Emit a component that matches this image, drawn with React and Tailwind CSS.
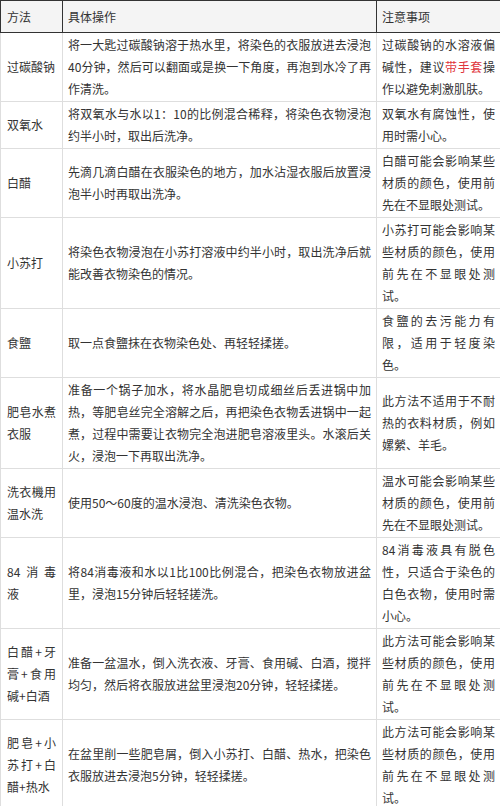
import React from 'react';

const rows = [
  {
    name: '过碳酸钠',
    how: '将一大匙过碳酸钠溶于热水里，将染色的衣服放进去浸泡40分钟，然后可以翻面或是换一下角度，再泡到水冷了再作清洗。',
    note: (
      <>
        过碳酸钠的水溶液偏碱性，建议<span className="text-[#e0343c]">带手套</span>操作以避免刺激肌肤。
      </>
    ),
  },
  {
    name: '双氧水',
    how: '将双氧水与水以1：10的比例混合稀释，将染色衣物浸泡约半小时，取出后洗净。',
    note: '双氧水有腐蚀性，使用时需小心。',
  },
  {
    name: '白醋',
    how: '先滴几滴白醋在衣服染色的地方，加水沾湿衣服后放置浸泡半小时再取出洗净。',
    note: '白醋可能会影响某些材质的颜色，使用前先在不显眼处测试。',
  },
  {
    name: '小苏打',
    how: '将染色衣物浸泡在小苏打溶液中约半小时，取出洗净后就能改善衣物染色的情况。',
    note: '小苏打可能会影响某些材质的颜色，使用前先在不显眼处测试。',
  },
  {
    name: '食鹽',
    how: '取一点食鹽抹在衣物染色处、再轻轻揉搓。',
    note: '食鹽的去污能力有限，适用于轻度染色。',
  },
  {
    name: '肥皂水煮衣服',
    how: '准备一个锅子加水，将水晶肥皂切成细丝后丢进锅中加热，等肥皂丝完全溶解之后，再把染色衣物丢进锅中一起煮，过程中需要让衣物完全泡进肥皂溶液里头。水滚后关火，浸泡一下再取出洗净。',
    note: '此方法不适用于不耐热的衣料材质，例如嫘縈、羊毛。',
  },
  {
    name: '洗衣機用温水洗',
    how: '使用50～60度的温水浸泡、清洗染色衣物。',
    note: '温水可能会影响某些材质的颜色，使用前先在不显眼处测试。',
  },
  {
    name: '84消毒液',
    how: '将84消毒液和水以1比100比例混合，把染色衣物放进盆里，浸泡15分钟后轻轻搓洗。',
    note: '84消毒液具有脱色性，只适合于染色的白色衣物，使用时需小心。',
  },
  {
    name: '白醋+牙膏+食用碱+白酒',
    how: '准备一盆温水，倒入洗衣液、牙膏、食用碱、白酒，搅拌均匀，然后将衣服放进盆里浸泡20分钟，轻轻揉搓。',
    note: '此方法可能会影响某些材质的颜色，使用前先在不显眼处测试。',
  },
  {
    name: '肥皂+小苏打+白醋+热水',
    how: '在盆里削一些肥皂屑，倒入小苏打、白醋、热水，把染色衣服放进去浸泡5分钟，轻轻揉搓。',
    note: '此方法可能会影响某些材质的颜色，使用前先在不显眼处测试。',
  },
];

const App = () => {
  return (
    <div className="w-[500px] bg-white text-[#333] font-['Noto_Sans_CJK_SC','Noto_Sans',sans-serif] text-[12px] leading-[22px]">
      <table className="w-[500px] table-fixed border-collapse">
        <colgroup>
          <col className="w-[62px]" />
          <col className="w-[314px]" />
          <col className="w-[124px]" />
        </colgroup>
        <thead>
          <tr className="h-[32px] bg-[#f4f4f4]">
            <th className="border border-[#333] px-[6px] text-left font-normal align-middle">方法</th>
            <th className="border border-[#333] px-[5px] text-left font-normal align-middle">具体操作</th>
            <th className="border border-[#333] px-[5px] text-left font-normal align-middle">注意事项</th>
          </tr>
        </thead>
        <tbody>
          {rows.map((r) => (
            <tr key={r.name}>
              <td className="border border-[#dedede] px-[6px] py-[1px] text-justify align-middle">{r.name}</td>
              <td className="border border-[#dedede] px-[5px] py-[1px] text-justify align-middle">{r.how}</td>
              <td className="border border-[#dedede] px-[5px] py-[1px] text-justify align-middle">{r.note}</td>
            </tr>
          ))}
        </tbody>
      </table>
    </div>
  );
};

export default App;
